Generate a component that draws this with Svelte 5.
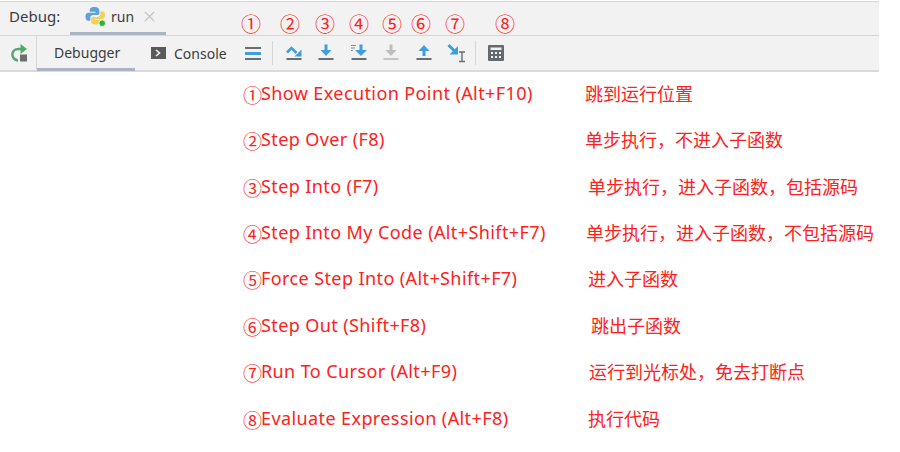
<script lang="ts">
  const markers = [
    { n: "①", width: 39 },
    { n: "②", width: 35 },
    { n: "③", width: 34 },
    { n: "④", width: 33 },
    { n: "⑤", width: 29 },
    { n: "⑥", width: 34 },
    { n: "⑦", width: 50 },
    { n: "⑧", width: 20 },
  ];

  const rows = [
    { n: "①", action: "Show Execution Point (Alt+F10)", note: "跳到运行位置", shift: 0 },
    { n: "②", action: "Step Over (F8)", note: "单步执行，不进入子函数", shift: 0 },
    { n: "③", action: "Step Into (F7)", note: "单步执行，进入子函数，包括源码", shift: 3 },
    { n: "④", action: "Step Into My Code (Alt+Shift+F7)", note: "单步执行，进入子函数，不包括源码", shift: 1 },
    { n: "⑤", action: "Force Step Into (Alt+Shift+F7)", note: "进入子函数", shift: 3 },
    { n: "⑥", action: "Step Out (Shift+F8)", note: "跳出子函数", shift: 6 },
    { n: "⑦", action: "Run To Cursor (Alt+F9)", note: "运行到光标处，免去打断点", shift: 4 },
    { n: "⑧", action: "Evaluate Expression (Alt+F8)", note: "执行代码", shift: 3 },
  ];
</script>

<div class="page">
  <header class="titlebar">
    <span class="title">Debug:</span>
    <div class="run-tab">
      <svg width="21" height="21" viewBox="0 0 22 22" aria-hidden="true">
        <path d="M10 1c-4 0-5 1.500-5 3.500V6h6v1H3.500C1.500 7 0.500 8.500 0.500 11s1 4.500 3 4.500H5.500v-3c0-2 1.500-3 3-3h4.500c1.500 0 2-1 2-2V4.500C15 2.500 13.500 1 10 1z" fill="#5ba3d9" />
        <path d="M11 19.500c4 0 5.500-1.500 5.500-3.500v-1.500h-6v-1h7.500c2 0 3-1.500 3-4s-1-4-3-4H16v2.800c0 2-1.500 3.200-3 3.200H8.500c-1.500 0-2 1-2 2V16c0 2 1 3.500 4.500 3.500z" fill="#f5d058" />
        <circle cx="18" cy="18" r="3.500" fill="#2fb52f" stroke="#f2f2f2" />
      </svg>
      <span class="run-name">run</span>
      <svg class="close" width="11" height="11" viewBox="0 0 11 11" aria-hidden="true">
        <path d="M1 1l9 9M10 1l-9 9" stroke="#c4c4c4" stroke-width="1.200" />
      </svg>
    </div>
    <div class="markers">
      {#each markers as m}
        <span class="marker" style="width: {m.width}px">{m.n}</span>
      {/each}
    </div>
  </header>

  <div class="toolbar">
    <div class="side">
      <svg width="18" height="18" viewBox="0 0 18 18" aria-hidden="true">
        <path d="M8 16.500A6 6 0 0 1 4 6.500Q5.500 5 9 5h2" fill="none" stroke="#55a76b" stroke-width="2.400" />
        <path d="M10.500 0L17 5l-6.500 5z" fill="#55a76b" />
        <rect x="10" y="10.500" width="7" height="7" fill="#6e6e6e" />
      </svg>
    </div>
    <div class="tab active">Debugger</div>
    <div class="tab console">
      <svg width="15" height="12" viewBox="0 0 15 12" aria-hidden="true">
        <rect width="15" height="12" fill="#5a5a5a" />
        <path d="M5 3l3.500 3L5 9" fill="none" stroke="#f2f2f2" stroke-width="1.600" />
      </svg>
      Console
    </div>
    <div class="actions">
      <svg class="icon" width="16" height="18" viewBox="0 0 16 18" aria-hidden="true">
        <rect y="3" width="16" height="2" fill="#6a6e71" />
        <rect y="8" width="16" height="3" fill="#3f9fdc" />
        <rect y="14" width="16" height="2" fill="#6a6e71" />
      </svg>
      <i class="sep"></i>
      <svg class="icon" width="18" height="18" viewBox="0 0 18 18" aria-hidden="true">
        <path d="M2 8.500L6.500 4l5 5" fill="none" stroke="#3f9fdc" stroke-width="2.600" />
        <path d="M16.500 5.500v7H9.500z" fill="#3f9fdc" />
        <rect x="1.500" y="14" width="15" height="2" fill="#6a6e71" />
      </svg>
      <svg class="icon" width="18" height="18" viewBox="0 0 18 18" aria-hidden="true">
        <path d="M9 0.500v7" stroke="#3f9fdc" stroke-width="3" />
        <path d="M3.500 6h11L9 12z" fill="#3f9fdc" />
        <rect x="1.500" y="14" width="15" height="2" fill="#6a6e71" />
      </svg>
      <svg class="icon" width="18" height="18" viewBox="0 0 18 18" aria-hidden="true">
        <path d="M1 1.500h5M1 4h4M1 6.500h2" stroke="#888" stroke-width="1.200" />
        <path d="M11 0.500v7" stroke="#3f9fdc" stroke-width="3" />
        <path d="M5 6h12l-6 6z" fill="#3f9fdc" />
        <rect x="1.500" y="14" width="15" height="2" fill="#6a6e71" />
      </svg>
      <svg class="icon" width="18" height="18" viewBox="0 0 18 18" aria-hidden="true">
        <path d="M9 0.500v7" stroke="#bdbdbd" stroke-width="3" />
        <path d="M3.500 6h11L9 12z" fill="#bdbdbd" />
        <rect x="1.500" y="14" width="15" height="2" fill="#c4c4c4" />
      </svg>
      <svg class="icon" width="18" height="18" viewBox="0 0 18 18" aria-hidden="true">
        <path d="M9 12v-6" stroke="#3f9fdc" stroke-width="3" />
        <path d="M3.500 7h11L9 1z" fill="#3f9fdc" />
        <rect x="1.500" y="14" width="15" height="2" fill="#6a6e71" />
      </svg>
      <svg class="icon" width="20" height="20" viewBox="0 0 20 20" aria-hidden="true">
        <path d="M1.500 2l7 7" stroke="#3f9fdc" stroke-width="3" />
        <path d="M11 3v8.500H2.500z" fill="#3f9fdc" />
        <path d="M12 9h6M12 18.500h6M15 9v9.500" fill="none" stroke="#6a6e71" stroke-width="1.400" />
      </svg>
      <i class="sep late"></i>
      <svg class="icon" width="16" height="16" viewBox="0 0 16 16" aria-hidden="true">
        <rect width="16" height="16" rx="1" fill="#666a6d" />
        <rect x="2.500" y="2.500" width="11" height="2.500" fill="#f2f2f2" />
        <path d="M3 7h2v2H3zM7 7h2v2H7zM11 7h2v2h-2zM3 11h2v2H3zM7 11h2v2H7zM11 11h2v2h-2z" fill="#f2f2f2" />
      </svg>
    </div>
  </div>

  <ul class="legend">
    {#each rows as row}
      <li class="row">
        <span class="num">{row.n}</span>
        <span class="action">{row.action}</span>
        <span class="note" style="margin-left: {row.shift}px">{row.note}</span>
      </li>
    {/each}
  </ul>
</div>

<style>
  :global(body) {
    margin: 0;
    background: #fff;
  }

  .page {
    width: 900px;
    height: 452px;
    overflow: hidden;
    font-family: "Noto Sans", "Noto Sans CJK SC", sans-serif;
  }

  .titlebar {
    width: 879px;
    height: 35px;
    margin-top: 1px;
    display: flex;
    align-items: stretch;
    box-sizing: border-box;
    background: #f2f2f2;
    border-top: 1px solid #d6d6d6;
    border-bottom: 1px solid #d6d6d6;
    color: #3c3c3c;
    font-size: 15px;
  }

  .title {
    padding: 4px 0 0 9px;
    width: 70px;
    box-sizing: border-box;
  }

  .run-tab {
    width: 96px;
    height: 33px;
    box-sizing: border-box;
    display: flex;
    align-items: center;
    gap: 2px;
    padding-left: 15px;
    padding-bottom: 2px;
    border-bottom: 3px solid #aab4c4;
  }

  .run-name {
    margin-left: 3px;
    font-size: 14px;
  }

  .close {
    margin-left: 8px;
  }

  .markers {
    display: flex;
    padding: 12px 0 0 75px;
  }

  .marker {
    color: #ff2020;
    font-size: 20px;
    line-height: 20px;
    font-family: "Noto Sans CJK SC", sans-serif;
  }

  .toolbar {
    width: 879px;
    height: 36px;
    display: flex;
    align-items: stretch;
    box-sizing: border-box;
    background: #f2f2f2;
    border-bottom: 2px solid #dadada;
    color: #3c3c3c;
    font-size: 14px;
  }

  .side {
    width: 37px;
    box-sizing: border-box;
    border-right: 1px solid #d6d6d6;
    padding-left: 2px;
    display: flex;
    align-items: center;
    justify-content: center;
  }

  .tab {
    display: flex;
    align-items: center;
    box-sizing: border-box;
  }

  .tab.active {
    width: 98px;
    padding-left: 17px;
    border-bottom: 3px solid #aab4c4;
    margin-bottom: -1px;
  }

  .tab.console {
    gap: 8px;
    padding-left: 16px;
  }

  .actions {
    display: flex;
    align-items: center;
    margin-left: 18px;
    gap: 14.5px;
  }

  .icon {
    flex: none;
  }

  .sep {
    width: 1px;
    height: 24px;
    background: #d6d6d6;
    margin: 0 -3px;
  }

  .sep.late {
    margin-left: -7px;
    margin-right: -2px;
  }

  .legend {
    list-style: none;
    margin: 0;
    padding: 0 0 0 243px;
    display: grid;
    grid-auto-rows: 46.4px;
    color: #ff2020;
  }

  .row {
    display: flex;
    align-items: center;
    position: relative;
    top: -2.4px;
  }

  .num {
    width: 18px;
    font-size: 19px;
    font-family: "Noto Sans CJK SC", sans-serif;
    padding-top: 3px;
  }

  .action {
    width: 324px;
    font-size: 18px;
    letter-spacing: 0.4px;
    white-space: nowrap;
  }

  .note {
    font-size: 18px;
    font-family: "Noto Sans CJK SC", sans-serif;
    white-space: nowrap;
  }
</style>
